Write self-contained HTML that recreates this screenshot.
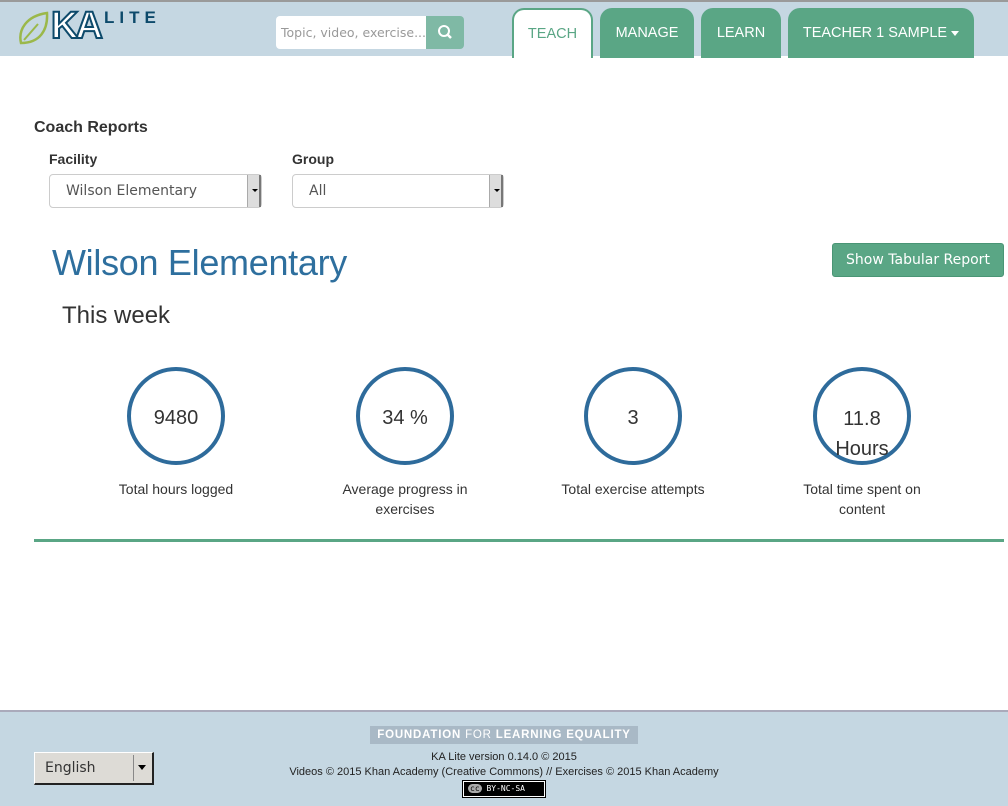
<!DOCTYPE html>
<html><head><meta charset="utf-8"><style>
*{box-sizing:border-box;margin:0;padding:0}
body{width:1008px;height:806px;overflow:hidden;font-family:"Liberation Sans",sans-serif;background:#fff;position:relative;color:#333}
.hdr{position:absolute;left:0;top:0;width:1008px;height:56px;background:#c5d7e2;border-top:2px solid #9a9a9a}
.abs{position:absolute}
.tab{position:absolute;top:6px;height:50px;background:#5aa685;color:#fff;border-radius:12px 12px 0 0;font-size:14.5px;text-align:center;line-height:50px;white-space:nowrap}
.sel{position:absolute;height:34px;border:1px solid #ccc;border-radius:4px;background:#fff;font-family:"DejaVu Sans",sans-serif;font-size:14px;color:#555;line-height:32px}
.sel .ar{position:absolute;right:0;top:0;width:14px;height:32px;background:#ddd;border-left:1px solid #aaa;border-right:2px solid #777}
.sel .ar:after{content:"";position:absolute;left:4px;top:14px;border:3px solid transparent;border-top:3px solid #000}
.circ{position:absolute;top:367px;width:98px;height:98px;border:4px solid #2e6b9b;border-radius:50%;text-align:center;font-size:20px;color:#333}
.lab{position:absolute;top:479px;width:200px;text-align:center;font-size:14px;line-height:20px;color:#333}
.ft{position:absolute;left:0;top:710px;width:1008px;height:96px;background:#c5d7e2;border-top:2px solid #aab}
</style></head><body>
<div class="hdr">
<svg class="abs" style="left:18px;top:8px" width="32" height="36" viewBox="0 0 32 36"><path d="M3 33 C0 20 8 6 29 3 C30 20 22 33 3 33 Z" fill="none" stroke="#9bb84a" stroke-width="2.5"/><path d="M6 30 L20 14" stroke="#9bb84a" stroke-width="2"/></svg>
<div class="abs" style="left:51px;top:5px;font-size:38px;font-weight:bold;color:#fff;-webkit-text-stroke:2px #0d4a6b;letter-spacing:-3px;line-height:38px">KA</div>
<div class="abs" style="left:104px;top:6px;font-size:17px;color:#0d4a6b;letter-spacing:5px;font-weight:bold">LITE</div>
<div class="abs" style="left:276px;top:14px;width:150px;height:33px;background:#fff;border-radius:4px 0 0 4px;font-family:'DejaVu Sans',sans-serif;font-size:12.5px;color:#999;line-height:33px;padding-left:5px">Topic, video, exercise...</div>
<div class="abs" style="left:426px;top:14px;width:38px;height:33px;background:#7fb9a5;border-radius:0 4px 4px 0"><svg width="38" height="33"><circle cx="18" cy="15" r="5" fill="none" stroke="#fff" stroke-width="2"/><path d="M21.5 18.5 L25 22" stroke="#fff" stroke-width="2.5"/></svg></div>
<div class="tab" style="left:512px;width:81px;background:#fff;color:#5aa685;border:2px solid #5aa685;border-bottom:none;line-height:48px">TEACH</div>
<div class="tab" style="left:600px;width:94px">MANAGE</div>
<div class="tab" style="left:701px;width:80px">LEARN</div>
<div class="tab" style="left:788px;width:186px">TEACHER 1 SAMPLE <span style="display:inline-block;border:4px solid transparent;border-top:5px solid #fff;vertical-align:-3px"></span></div>
</div>
<div class="abs" style="left:34px;top:119px;font-size:16px;font-weight:bold">Coach Reports</div>
<div class="abs" style="left:49px;top:151px;font-size:14px;font-weight:bold">Facility</div>
<div class="abs" style="left:292px;top:151px;font-size:14px;font-weight:bold">Group</div>
<div class="sel" style="left:49px;top:174px;width:213px;padding-left:16px">Wilson Elementary<div class="ar"></div></div>
<div class="sel" style="left:292px;top:174px;width:212px;padding-left:16px">All<div class="ar"></div></div>
<div class="abs" style="left:52px;top:242px;font-size:36px;color:#2e6f9e;letter-spacing:-0.3px">Wilson Elementary</div>
<div class="abs" style="left:832px;top:243px;width:172px;height:34px;background:#5aa685;border:1px solid #4a9575;border-radius:3px;color:#fff;font-family:'DejaVu Sans',sans-serif;font-size:14px;text-align:center;line-height:32px">Show Tabular Report</div>
<div class="abs" style="left:62px;top:302px;font-size:24px">This week</div>
<div class="circ" style="left:127px;line-height:94px">9480</div>
<div class="circ" style="left:356px;line-height:94px">34 %</div>
<div class="circ" style="left:584px;line-height:94px">3</div>
<div class="circ" style="left:813px;line-height:30px;padding-top:33px">11.8<br>Hours</div>
<div class="lab" style="left:76px">Total hours logged</div>
<div class="lab" style="left:305px">Average progress in<br>exercises</div>
<div class="lab" style="left:533px">Total exercise attempts</div>
<div class="lab" style="left:762px">Total time spent on<br>content</div>
<div class="abs" style="left:34px;top:539px;width:970px;height:3px;background:#5aa685"></div>
<div class="ft">
<div class="abs" style="left:370px;top:14px;width:268px;height:18px;background:#a9b9c6;color:#fff;font-size:11.5px;letter-spacing:0.8px;text-align:center;line-height:18px;font-weight:bold;white-space:nowrap">FOUNDATION <span style="font-weight:normal">FOR</span> LEARNING EQUALITY</div>
<div class="abs" style="left:0;top:39px;width:1008px;text-align:center;font-size:11px;color:#222">KA Lite version 0.14.0 © 2015</div>
<div class="abs" style="left:0;top:54px;width:1008px;text-align:center;font-size:11px;color:#222">Videos © 2015 Khan Academy (Creative Commons) // Exercises © 2015 Khan Academy</div>
<div class="abs" style="left:463px;top:69px;width:82px;height:16px;background:#000;border:1px solid #fff;outline:1px solid #000;color:#fff;font-size:8px;line-height:14px;padding-left:4px;font-family:'DejaVu Sans Mono',monospace"><span style="background:#aaa;color:#000;border-radius:6px;padding:0 2px">cc</span> BY-NC-SA</div>
<div class="abs" style="left:34px;top:40px;width:120px;height:33px;background:#dddbd6;border:1px solid #fff;border-right:2px solid #222;border-bottom:2px solid #222;font-family:'DejaVu Sans',sans-serif;font-size:14px;color:#333;line-height:30px;padding-left:10px">English<div class="abs" style="left:98px;top:2px;width:1px;height:26px;background:#888"></div><div class="abs" style="left:103px;top:12px;border:4px solid transparent;border-top:5px solid #000"></div></div>
</div>
</body></html>
